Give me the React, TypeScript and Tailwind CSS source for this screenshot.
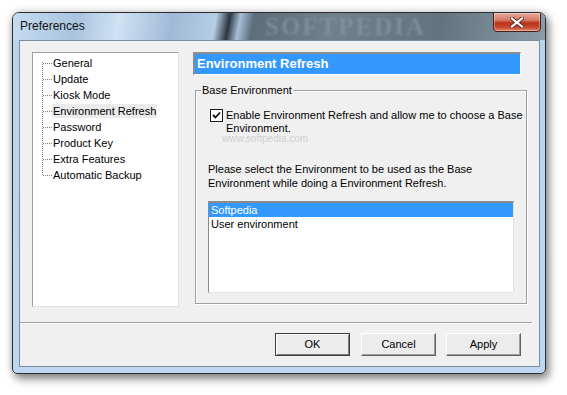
import React from "react";

const treeItems = [
  "General",
  "Update",
  "Kiosk Mode",
  "Environment Refresh",
  "Password",
  "Product Key",
  "Extra Features",
  "Automatic Backup",
];

function CloseGlyph() {
  return (
    <svg width="14" height="11" viewBox="0 0 14 11">
      <path d="M2 1.5 L12 9.5 M12 1.5 L2 9.5" stroke="#5a2a22" strokeWidth="4" strokeLinecap="square" />
      <path d="M2 1.5 L12 9.5 M12 1.5 L2 9.5" stroke="#ffffff" strokeWidth="2.2" strokeLinecap="square" />
    </svg>
  );
}

function DialogButton({ label, isDefault }: { label: string; isDefault?: boolean }) {
  return (
    <div
      className={
        "w-[75px] h-[23px] flex items-center justify-center bg-[#ececec] text-[11px] text-black " +
        (isDefault
          ? "border border-[#3c3c3c] shadow-[inset_1px_1px_0_#ffffff,inset_-1px_-1px_0_#7a7a7a]"
          : "border-t border-l border-[#ffffff] border-r border-b border-r-[#5f5f5f] border-b-[#5f5f5f] shadow-[inset_-1px_-1px_0_#a0a0a0]")
      }
    >
      {label}
    </div>
  );
}

export default function App() {
  return (
    <div
      className="w-[567px] h-[395px] bg-white overflow-hidden pt-[12px] pl-[12px]"
      style={{ fontFamily: '"Liberation Sans", Arial, sans-serif' }}
    >
      {/* window */}
      <div className="relative w-[534px] h-[362px] border border-[#2a2e33] rounded-t-[7px] rounded-b-[5px] bg-[linear-gradient(to_bottom,#b9d3ee,#bcd8f3)] shadow-[3px_5px_10px_rgba(0,0,0,0.45),0_0_8px_rgba(0,0,0,0.2)] flex flex-col">
        {/* title bar */}
        <div className="relative h-[27px] rounded-t-[6px] overflow-hidden bg-[linear-gradient(100deg,#c6dcf1_0%,#a9c4df_12%,#d0e2f3_20%,#9fbad6_30%,#b6cde4_38%,#2b3540_40.5%,#a7bfd7_42.5%,#5d6d7b_45%,#6f808e_60%,#63737f_80%,#8b9cab_100%)]">
          <div className="absolute left-[252px] top-[2px] text-[25px] font-bold tracking-[2px] text-[#8d9ba7] opacity-60 blur-[1px] leading-[24px]" style={{ fontFamily: '"Liberation Serif", serif' }}>
            SOFTPEDIA
          </div>
          <div className="absolute left-[7px] top-[6px] text-[12px] leading-[15px] text-[#111]">Preferences</div>
          <div className="absolute left-[480px] top-[-1px] w-[48px] h-[20px] rounded-b-[4px] border border-[#4a1c14] bg-[linear-gradient(to_bottom,#e9aa9c_0%,#d67a66_40%,#b8311b_55%,#c9482f_80%,#e08a6d_100%)] shadow-[inset_0_0_0_1px_rgba(255,255,255,0.35)] flex items-center justify-center">
            <CloseGlyph />
          </div>
        </div>

        {/* client area */}
        <div className="ml-[6px] w-[521px] h-[327px] border border-[#7d8a97] bg-[#f0f0f0] relative">
          <div className="flex pt-[11px] pl-[12px]">
            {/* tree */}
            <div className="w-[147px] h-[255px] border-t border-l border-[#a0a0a0] border-r border-b border-r-[#e3e3e3] border-b-[#e3e3e3] bg-white relative pt-[2px]">
              <div className="absolute left-[9px] top-[9px] h-[113px] border-l border-dotted border-[#808080]" />
              {treeItems.map((t, i) => (
                <div key={t} className="relative h-[16px] flex items-center">
                  <div className="absolute left-[10px] top-[8px] w-[9px] border-t border-dotted border-[#808080]" />
                  <span
                    className={
                      "ml-[19px] px-[1px] text-[11px] leading-[14px] text-black " +
                      (i === 3 ? "bg-[#ebebeb]" : "")
                    }
                  >
                    {t}
                  </span>
                </div>
              ))}
            </div>

            {/* right column */}
            <div className="ml-[14px] flex flex-col">
              <div className="w-[328px] h-[23px] border-t-2 border-l-2 border-[#8c8c8c] border-r border-b border-r-white border-b-white bg-[#3399ff] flex items-center pl-[2px]">
                <span className="text-[13px] font-bold text-white leading-[16px]">Environment Refresh</span>
              </div>

              <div className="relative mt-[15px] ml-[2px] w-[332px] h-[214px] border border-[#a0a0a0] shadow-[inset_1px_1px_0_#ffffff,1px_1px_0_#ffffff] pl-[12px] pt-[17px]">
                <div className="absolute left-[5px] top-[-8px] bg-[#f0f0f0] px-[1px] text-[11px] leading-[14px] text-black">
                  Base Environment
                </div>
                <div className="flex items-start ml-[2px]">
                  <div className="mt-[1px] w-[13px] h-[13px] border border-[#1c1c1c] bg-white flex items-center justify-center shrink-0">
                    <svg width="9" height="9" viewBox="0 0 9 9">
                      <path d="M1 4 L3.5 6.5 L8 1.5" stroke="#111" strokeWidth="1.8" fill="none" />
                    </svg>
                  </div>
                  <div className="ml-[3px] mt-[1px] text-[11px] leading-[13px] text-black">
                    Enable Environment Refresh and allow me to choose a Base
                    <br />
                    Environment.
                  </div>
                </div>
                <div className="mt-[27px] text-[11px] leading-[14px] text-black">
                  Please select the Environment to be used as the Base
                  <br />
                  Environment while doing a Environment Refresh.
                </div>
                <div className="mt-[11px] w-[306px] h-[92px] border-t-2 border-l border-[#8a8a8a] border-r border-b border-r-[#e3e3e3] border-b-[#e3e3e3] bg-white">
                  <div className="h-[14px] bg-[#3399ff] text-white text-[11px] leading-[14px] pl-[2px]">Softpedia</div>
                  <div className="h-[14px] text-black text-[11px] leading-[14px] pl-[2px]">User environment</div>
                </div>
                <div className="absolute left-[26px] top-[42px] text-[10px] text-[#cfcfcf] leading-[12px] pointer-events-none">
                  www.softpedia.com
                </div>
              </div>
            </div>
          </div>

          {/* separator */}
          <div className="mt-[15px] w-[512px] h-[2px] border-t border-[#a0a0a0] border-b border-b-white" />

          {/* buttons */}
          <div className="mt-[9px] flex justify-end pr-[18px]">
            <DialogButton label="OK" isDefault />
            <div className="ml-[11px]">
              <DialogButton label="Cancel" />
            </div>
            <div className="ml-[10px]">
              <DialogButton label="Apply" />
            </div>
          </div>
        </div>
      </div>
    </div>
  );
}
